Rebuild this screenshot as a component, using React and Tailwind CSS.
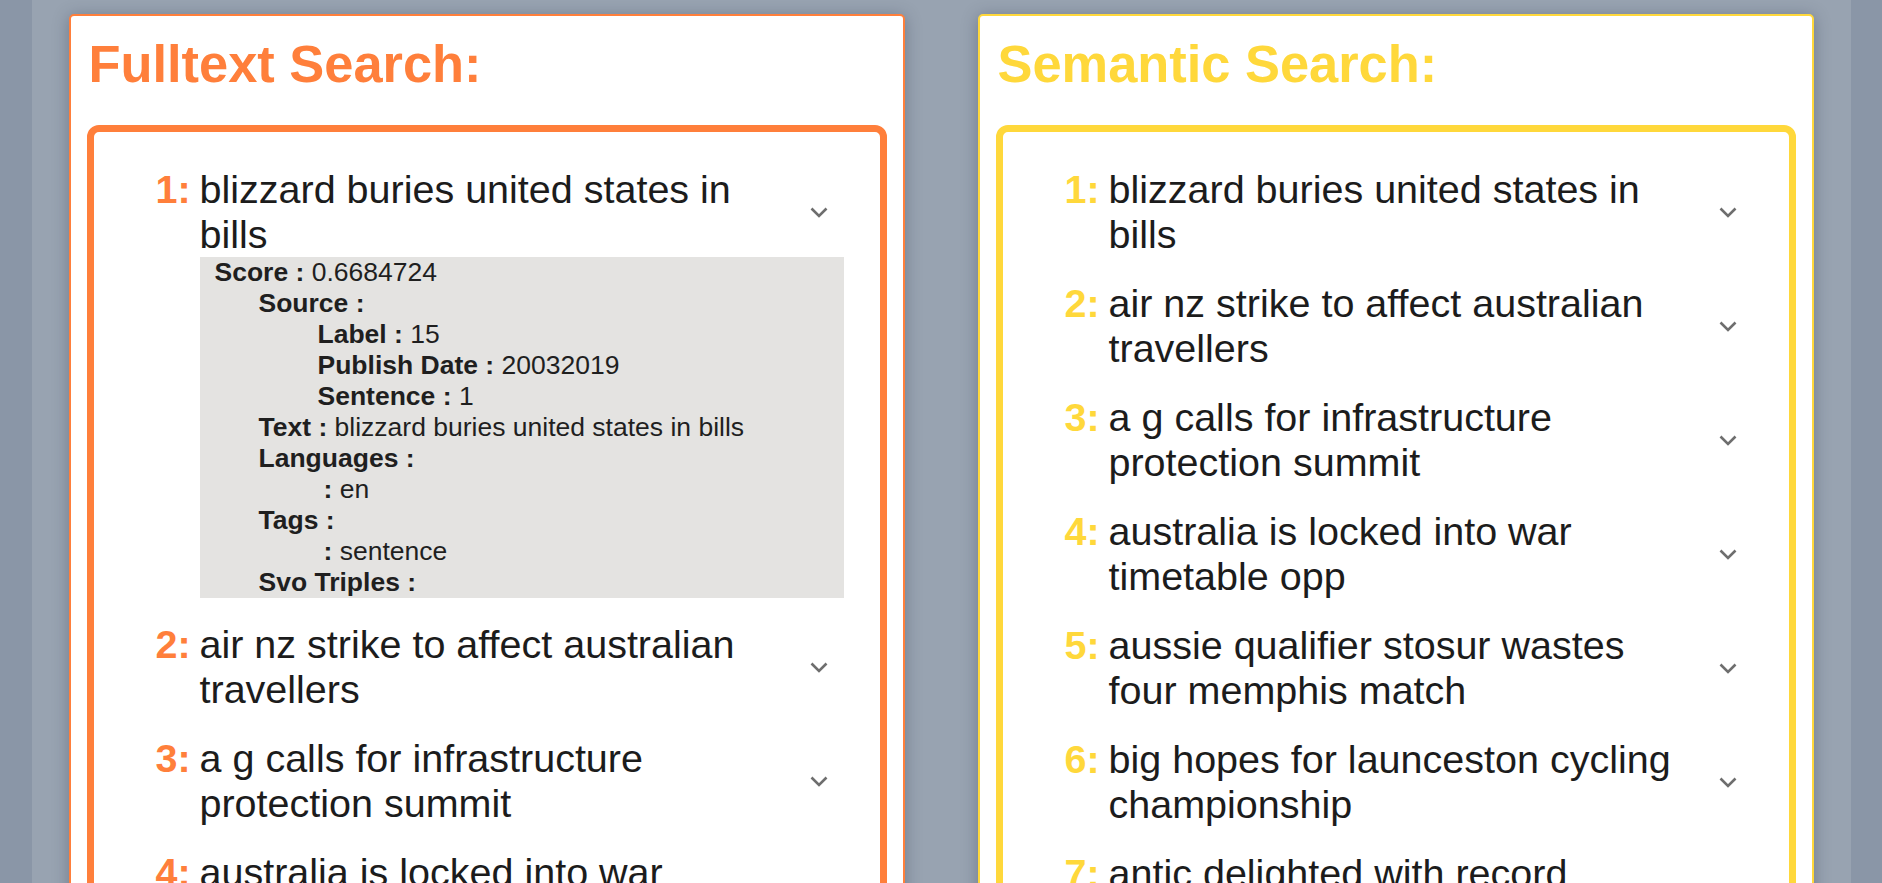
const headlines = [
  "blizzard buries united states in bills",
  "air nz strike to affect australian travellers",
  "a g calls for infrastructure protection summit",
  "australia is locked into war timetable opp",
  "aussie qualifier stosur wastes four memphis match",
  "big hopes for launceston cycling championship",
  "antic delighted with record breaking barca",
  "aust addresses un security council over iraq",
];

const details = [
  { k: "Score", v: "0.6684724", pl: "pl-[15px]" },
  { k: "Source", v: "", pl: "pl-[59px]" },
  { k: "Label", v: "15", pl: "pl-[118px]" },
  { k: "Publish Date", v: "20032019", pl: "pl-[118px]" },
  { k: "Sentence", v: "1", pl: "pl-[118px]" },
  { k: "Text", v: "blizzard buries united states in bills", pl: "pl-[59px]" },
  { k: "Languages", v: "", pl: "pl-[59px]" },
  { k: "", v: "en", pl: "pl-[124px]" },
  { k: "Tags", v: "", pl: "pl-[59px]" },
  { k: "", v: "sentence", pl: "pl-[124px]" },
  { k: "Svo Triples", v: "", pl: "pl-[59px]" },
];

function Chevron() {
  return (
    <svg width="18" height="11" viewBox="0 0 18 11" fill="none">
      <polyline
        points="1.5,1.5 9,9 16.5,1.5"
        stroke="#6e6e6e"
        strokeWidth="2.6"
      />
    </svg>
  );
}

function Details() {
  return (
    <div className="ml-[44px] bg-[#e4e3e1] text-[26.5px] leading-[31px] text-[#1f1f1f]">
      {details.map((d, i) => (
        <div key={i} className={d.pl}>
          <b>{d.k ? d.k + " :" : ":"}</b>
          {d.v ? " " + d.v : ""}
        </div>
      ))}
    </div>
  );
}

function Card({ title, accent, expandFirst }) {
  const text = accent === "orange" ? "text-[#ff7f3b]" : "text-[#ffd83b]";
  const border = accent === "orange" ? "border-[#ff7f3b]" : "border-[#ffd83b]";

  return (
    <div
      className={`bg-white border-2 ${border} rounded-[5px] px-4 pt-[18px] pb-4 shadow-[0_2px_16px_rgba(40,50,70,0.35)]`}
    >
      <h1 className={`pl-[2px] text-[52.4px] leading-[60px] font-bold ${text}`}>
        {title}
      </h1>
      <div className={`mt-[31px] border-[7px] ${border} rounded-[12px] pt-[35px] pl-[62px] pr-[36px] pb-6`}>
        <ol className="flex flex-col gap-[24px]">
          {headlines.map((h, i) => (
            <li key={i}>
              <div className="flex items-center">
                <span className={`w-[44px] shrink-0 self-start font-bold text-[39.5px] leading-[45px] ${text}`}>
                  {i + 1}:
                </span>
                <span className="flex-1 text-[39.5px] leading-[45px] text-[#1c1c1c]">
                  {h}
                </span>
                <span className="w-[66px] shrink-0 flex justify-end pr-[16px]">
                  <Chevron />
                </span>
              </div>
              {expandFirst && i === 0 && <Details />}
            </li>
          ))}
        </ol>
      </div>
    </div>
  );
}

export default function App() {
  return (
    <div className="h-[883px] overflow-hidden bg-[#8a96a7] font-['Liberation_Sans',Arial,sans-serif]">
      <div className="mx-auto w-[1819px] min-h-full bg-[#98a3b1] px-[37px] pt-[14px] grid grid-cols-2 gap-[73px] items-start">
        <Card title="Fulltext Search:" accent="orange" expandFirst />
        <Card title="Semantic Search:" accent="yellow" />
      </div>
    </div>
  );
}
